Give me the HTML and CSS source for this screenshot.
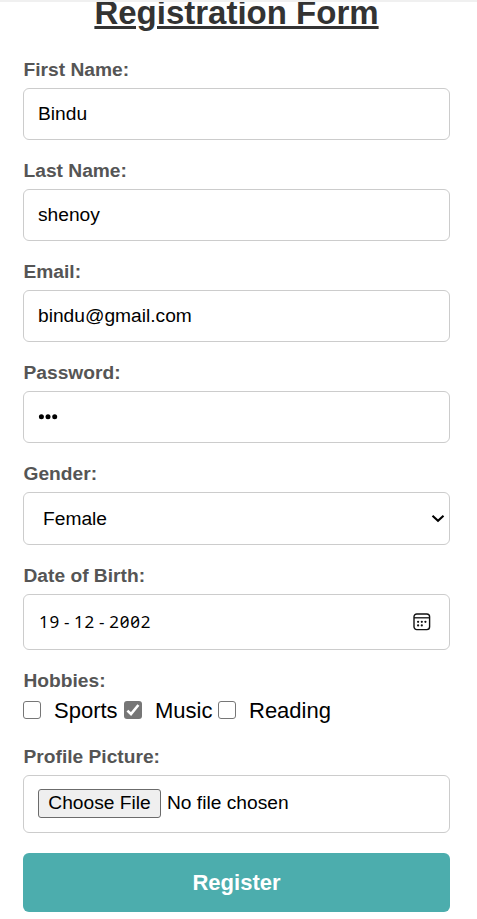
FILE: index.html
```html
<!DOCTYPE html>
<html lang="en">
<head>
<meta charset="utf-8">
<title>Registration Form</title>
<link rel="stylesheet" href="styles.css">
</head>
<body>
<div class="top-edge"></div>
<form class="form">
  <h2 class="title">Registration Form</h2>
  <div class="field">
    <label for="first">First Name:</label>
    <input class="control" id="first" type="text" value="Bindu">
  </div>
  <div class="field">
    <label for="last">Last Name:</label>
    <input class="control" id="last" type="text" value="shenoy">
  </div>
  <div class="field">
    <label for="email">Email:</label>
    <input class="control" id="email" type="text" value="bindu@gmail.com">
  </div>
  <div class="field">
    <label>Password:</label>
    <div class="control password">
      <svg width="20" height="6" viewBox="0 0 20 6"><circle cx="3.4" cy="2.8" r="2.5"/><circle cx="10" cy="2.8" r="2.5"/><circle cx="16.7" cy="2.8" r="2.5"/></svg>
    </div>
  </div>
  <div class="field">
    <label>Gender:</label>
    <div class="control select">
      <span>Female</span>
      <svg width="14" height="9" viewBox="0 0 14 9"><path d="M1.5 1.8L7 6.8L12.5 1.8" fill="none" stroke="#000" stroke-width="2.1"/></svg>
    </div>
  </div>
  <div class="field">
    <label>Date of Birth:</label>
    <div class="control date">
      <span class="digits"><span>19</span><span class="sep">-</span><span>12</span><span class="sep">-</span><span>2002</span></span>
      <svg width="18" height="18" viewBox="0 0 18 18"><rect x="1" y="1" width="15.6" height="15.6" rx="2.8" fill="none" stroke="#111" stroke-width="1.4"/><path d="M1 4.8H16.6" stroke="#111" stroke-width="1.3"/><g fill="#111"><circle cx="5.1" cy="8.8" r="1.1"/><circle cx="8.8" cy="8.8" r="1.1"/><circle cx="12.4" cy="8.8" r="1.1"/><circle cx="5.1" cy="12.4" r="1.1"/><circle cx="8.8" cy="12.4" r="1.1"/></g></svg>
    </div>
  </div>
  <div class="field">
    <label>Hobbies:</label>
    <div class="hobbies">
      <span class="box"></span><span class="hobby sports">Sports</span>
      <span class="box checked"><svg width="18" height="18" viewBox="0 0 18 18"><path d="M3.4 9.6L7 13L14.4 4" fill="none" stroke="#fff" stroke-width="2.6"/></svg></span><span class="hobby music">Music</span>
      <span class="box"></span><span class="hobby">Reading</span>
    </div>
  </div>
  <div class="field">
    <label>Profile Picture:</label>
    <div class="control file">
      <button class="choose" type="button">Choose File</button>
      <span>No file chosen</span>
    </div>
  </div>
  <button class="submit" type="button">Register</button>
</form>
</body>
</html>
```
FILE: styles.css
```css
* { box-sizing: border-box; }
html { height: 919px; overflow: hidden; }
body {
  margin: 0;
  height: 919px;
  overflow: hidden;
  background: #fff;
  color: #000;
  font-family: "Liberation Sans", Arial, sans-serif;
}
.top-edge {
  position: absolute;
  top: 0;
  left: 0;
  width: 100%;
  height: 2px;
  background: #f0f0f0;
}
.form {
  display: flex;
  flex-direction: column;
  gap: 20px;
  padding: 0 27px 0 23px;
}
.title {
  margin: -6px 0 7px;
  height: 38px;
  line-height: 38px;
  font-size: 33px;
  color: #333;
  text-align: center;
  text-decoration: underline;
  text-decoration-thickness: 3px;
}
.field { display: flex; flex-direction: column; }
.field label {
  height: 22px;
  line-height: 22px;
  margin-bottom: 7px;
  padding-left: 0.5px;
  font-size: 19.2px;
  font-weight: bold;
  color: #555;
}
.control {
  display: flex;
  align-items: center;
  width: 100%;
  height: 52px;
  padding: 0 14px;
  border: 1px solid #ccc;
  border-radius: 6px;
  background: #fff;
  color: #000;
  font-family: inherit;
  font-size: 19.2px;
  outline: none;
}
.select {
  height: 53px;
  padding: 0 4px 0 19px;
  justify-content: space-between;
}
.date {
  height: 56px;
  padding: 0 18px 0 15px;
  justify-content: space-between;
}
.digits {
  display: flex;
  padding-bottom: 2px;
  font-family: "Noto Sans", sans-serif;
  font-size: 17px;
  font-feature-settings: "zero";
  letter-spacing: 0.8px;
}
.sep { width: 14px; text-align: center; }
.hobbies {
  display: flex;
  align-items: center;
  height: 34px;
  margin-top: -7px;
  padding-top: 2px;
  font-size: 22px;
}
.box {
  width: 18px;
  height: 18px;
  margin-right: 13px;
  border: 1.5px solid #767676;
  border-radius: 3px;
}
.checked {
  display: flex;
  border: 0;
  background: #767676;
}
.hobby { line-height: 26px; padding-top: 2px; }
.sports { width: 70px; }
.music { width: 63px; }
.file { height: 58px; gap: 6px; padding-bottom: 2px; }
.choose {
  width: 123px;
  height: 29px;
  padding: 0;
  border: 1px solid #6b6b6b;
  border-radius: 3px;
  background: #efefef;
  color: #000;
  font-family: inherit;
  font-size: 19.2px;
}
.submit {
  height: 59px;
  border: 0;
  border-radius: 6px;
  background: #4cadad;
  color: #fff;
  font-family: inherit;
  font-size: 22px;
  font-weight: bold;
}
```
